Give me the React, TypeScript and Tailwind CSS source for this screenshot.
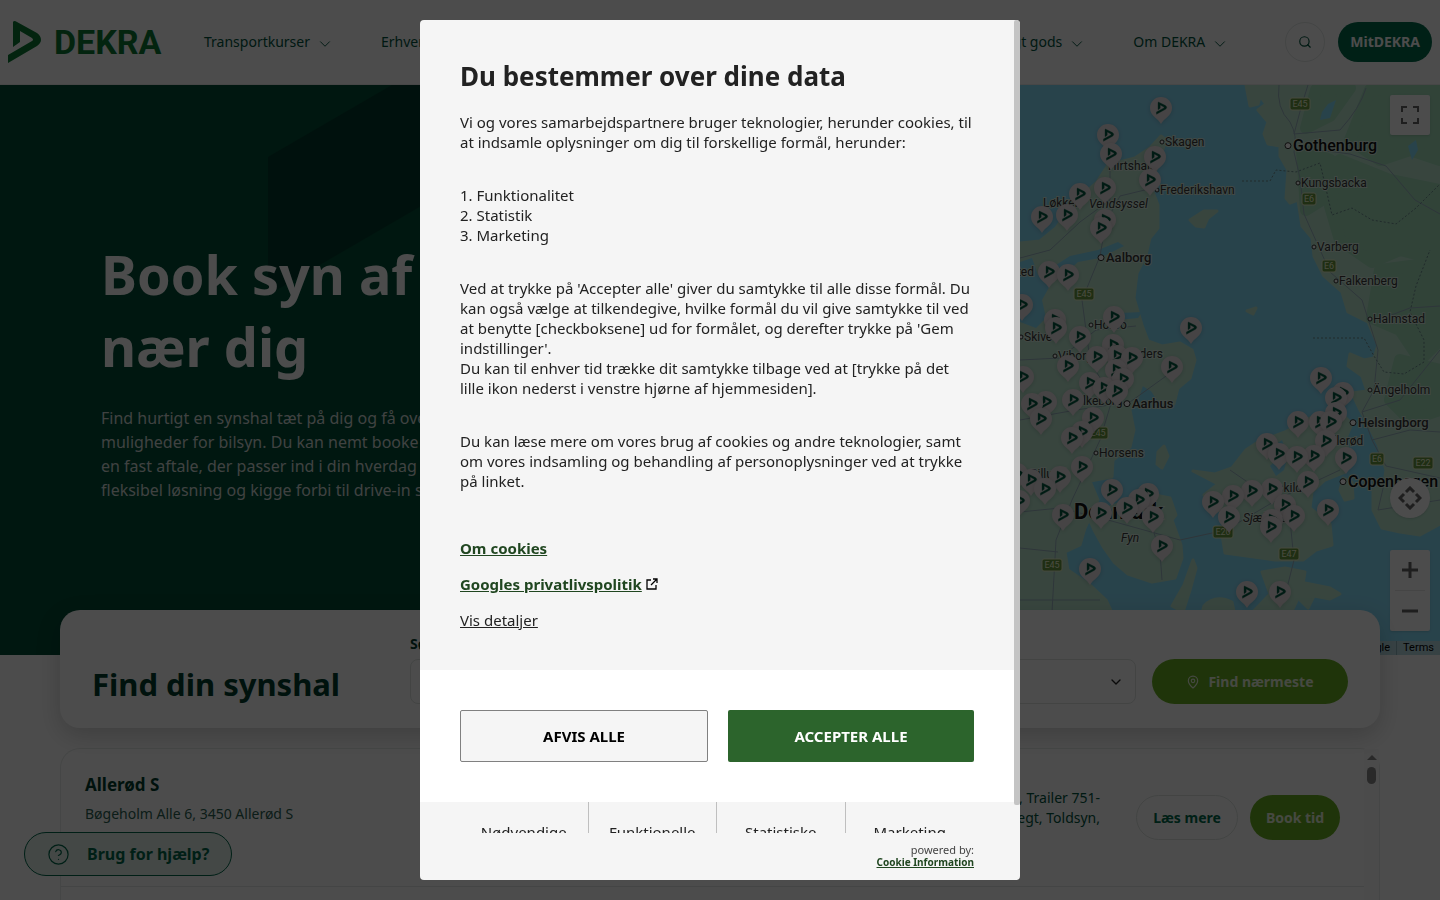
import { ChevronDown, CircleHelp, MapPin, Search } from 'lucide-react';

const sans = "font-['Noto_Sans',sans-serif]";

const markPath =
  'M13 22Q14 20 17 22L37 33Q41 36 41 40Q41 43 37 46L8 63V55L32 41Q34 40 32 38L20 31V42L13 47Z';

const pins: [number, number][] = [
  [1161, 108], [1108, 135], [1111, 154], [1155, 157], [1150, 180], [1105, 188], [1080, 194],
  [1067, 215], [1042, 217], [1105, 220], [1101, 228], [1049, 272], [1068, 275], [1022, 305],
  [1114, 317], [1055, 320], [1056, 328], [1191, 328], [1080, 337], [1113, 345], [1117, 356],
  [1097, 357], [1132, 358], [1068, 366], [1172, 367], [1116, 370], [1023, 377], [1321, 378],
  [1123, 379], [1090, 383], [1104, 388], [1117, 391], [1343, 393], [1336, 398], [1073, 400],
  [1046, 402], [1032, 404], [1336, 413], [1093, 418], [1041, 419], [1298, 422], [1320, 422],
  [1331, 422], [1082, 432], [1072, 438], [1326, 441], [1267, 444], [1279, 454], [1314, 456],
  [1297, 457], [1346, 458], [1082, 467], [1017, 474], [1060, 477], [1031, 480], [1308, 482],
  [1045, 489], [1272, 489], [1112, 490], [1252, 491], [1148, 494], [1233, 496], [1139, 500],
  [1019, 501], [1213, 502], [1285, 505], [1127, 508], [1328, 510], [1101, 513], [1063, 515],
  [1294, 516], [1153, 517], [1229, 517], [1272, 520], [1271, 527], [1162, 546], [1090, 569],
  [1247, 592], [1280, 592],
];

interface Place {
  name: string;
  x: number;
  y: number;
  size?: number;
  dot?: boolean;
  italic?: boolean;
  bold?: boolean;
}

const places: Place[] = [
  { name: 'Skagen', x: 1165, y: 146, dot: true },
  { name: 'Hirtshals', x: 1108, y: 170 },
  { name: 'Frederikshavn', x: 1160, y: 194, dot: true },
  { name: 'Løkken', x: 1043, y: 207 },
  { name: 'Vendsyssel', x: 1089, y: 208, italic: true },
  { name: 'Aalborg', x: 1106, y: 262, size: 13, dot: true },
  { name: 'Thisted', x: 994, y: 276 },
  { name: 'Hobro', x: 1094, y: 329, dot: true },
  { name: 'Skive', x: 1024, y: 341, dot: true },
  { name: 'Viborg', x: 1058, y: 360, dot: true },
  { name: 'Randers', x: 1119, y: 358, size: 12 },
  { name: 'Silkeborg', x: 1073, y: 405 },
  { name: 'Aarhus', x: 1132, y: 408, size: 13, dot: true },
  { name: 'Horsens', x: 1099, y: 457, dot: true },
  { name: 'Billund', x: 1030, y: 478 },
  { name: 'Fyn', x: 1121, y: 542, italic: true },
  { name: 'Sjælland', x: 1243, y: 522, italic: true },
  { name: 'Roskilde', x: 1263, y: 492 },
  { name: 'Hillerød', x: 1322, y: 445 },
  { name: 'Gothenburg', x: 1293, y: 151, size: 16, dot: true },
  { name: 'Kungsbacka', x: 1301, y: 187, dot: true },
  { name: 'Varberg', x: 1317, y: 251, dot: true },
  { name: 'Falkenberg', x: 1339, y: 285, dot: true },
  { name: 'Halmstad', x: 1373, y: 323, dot: true },
  { name: 'Ängelholm', x: 1373, y: 394, dot: true },
  { name: 'Helsingborg', x: 1358, y: 427, size: 13, dot: true },
  { name: 'Copenhagen', x: 1348, y: 487, size: 16, dot: true },
  { name: 'Denmark', x: 1074, y: 519, size: 22, bold: true },
];

const roadSigns = [
  { name: 'E45', x: 1300, y: 104 },
  { name: 'E6', x: 1309, y: 199 },
  { name: 'E6', x: 1329, y: 266 },
  { name: 'E45', x: 1084, y: 294 },
  { name: 'E45', x: 1098, y: 433 },
  { name: 'E6', x: 1377, y: 459 },
  { name: 'E22', x: 1423, y: 463 },
  { name: 'E20', x: 1223, y: 532 },
  { name: 'E47', x: 1289, y: 554 },
  { name: 'E45', x: 1052, y: 565 },
];

const land = [
  // Jylland
  'M720 240L1020 243L1040 241L1056 228L1075 202L1097 182L1108 165L1135 158L1150 148L1161 136L1166 140L1160 158L1153 178L1153 192L1158 205L1158 228L1150 238L1146 255L1137 273L1134 298L1142 325L1148 341L1162 346L1180 343L1192 350L1195 360L1190 378L1178 388L1174 404L1160 402L1152 390L1142 384L1138 396L1130 410L1134 430L1130 447L1113 460L1112 477L1090 481L1098 500L1085 528L1080 545L1065 552L1068 570L1090 585L1106 600L1113 615L1113 655L720 655Z',
  // Fyn
  'M1086 512L1110 507L1130 500L1150 490L1160 496L1170 498L1176 515L1172 520L1181 545L1182 558L1175 578L1152 582L1128 574L1114 562L1104 548L1094 530Z',
  'M1193 560L1196 568L1190 590L1183 612L1172 606L1184 585Z',
  // Sjælland
  'M1193 471L1215 474L1232 468L1246 450L1258 442L1285 432L1310 418L1338 410L1352 424L1345 440L1350 456L1345 472L1325 480L1312 492L1310 508L1330 524L1332 545L1316 550L1303 560L1275 560L1225 553L1222 535L1234 522L1216 508L1204 495L1218 484Z',
  'M1262 572L1285 568L1305 572L1302 590L1290 615L1250 615L1270 594Z',
  'M1204 606Q1215 594 1232 602L1236 620H1200Z',
  'M1305 583L1330 588L1340 594L1330 599L1314 596L1308 608L1300 600Z',
  'M1343 478L1352 482L1353 498L1345 500L1340 490Z',
  // Sverige
  'M1252 85L1266 104L1258 110L1268 122L1264 134L1268 144L1280 146L1280 156L1288 170L1286 198L1290 203L1298 200L1302 226L1312 238L1314 256L1324 276L1342 292L1348 312L1368 322L1378 345L1374 358L1364 360L1350 354L1348 366L1362 376L1367 391L1352 393L1360 410L1368 424L1378 444L1386 470L1384 484L1373 490L1373 510L1382 528L1400 532L1420 535L1440 524V85Z',
  'M1246 85L1262 90L1258 104L1250 106Z',
  'M1190 220L1204 211L1217 211L1208 218L1204 227L1196 226Z',
  'M1158 452L1164 446L1168 456L1162 468L1157 464Z',
  'M1247 311L1256 308L1253 314Z',
];

const roads = [
  'M1279 85Q1276 108 1290 122Q1298 136 1294 152L1300 178L1304 214L1330 272L1362 300L1378 350L1374 390L1362 412L1372 440L1386 466L1440 478',
  'M1308 85L1302 104L1294 134L1340 130Q1360 108 1366 88',
  'M1304 148L1350 154L1386 166L1415 200L1440 214',
  'M1153 188L1120 196L1106 222L1100 256L1082 300L1090 360L1112 400L1100 440L1072 500L1056 540L1052 612',
  'M1110 166V200L1080 222L1050 250L1020 258',
  'M1020 360L1060 358L1096 330L1136 326M1020 420L1076 410L1130 402L1180 366M1020 512L1060 508L1108 520L1180 540L1226 530L1280 498L1340 470',
  'M1150 520L1160 552L1162 580M1290 520L1294 560L1284 600M1230 470L1262 492L1310 490M1020 548L1058 552M1020 600H1100',
  'M1362 412L1400 400L1440 350M1378 320L1410 308L1440 306M1372 440L1410 430L1440 432M1385 480L1378 510L1440 500',
];

const forests = [
  'M1316 90L1350 88L1330 116L1306 128Z',
  'M1370 90L1440 85V160L1410 150L1380 160L1350 140Z',
  'M1340 160L1390 180L1440 190V260L1400 250L1372 262L1340 240L1330 206Z',
  'M1380 270L1440 262V340L1420 360L1400 330L1372 318Z',
  'M1400 360L1440 370V410L1410 420L1390 400Z',
  'M1302 150L1330 160L1322 200L1306 210Z',
];

function Map() {
  return (
    <svg
      viewBox="720 85 720 570"
      preserveAspectRatio="xMaxYMin slice"
      className="h-full w-full font-[Roboto,sans-serif]"
      role="img"
      aria-label="Kort over synshaller"
    >
      <rect x="720" y="85" width="720" height="570" fill="#88dffb" />
      {land.map((d) => (
        <path key={d} d={d} fill="#bce8d1" stroke="#bce8d1" strokeWidth="3" strokeLinejoin="round" />
      ))}
      {forests.map((d) => (
        <path key={d} d={d} fill="#a4dfbd" stroke="#a4dfbd" strokeWidth="12" strokeLinejoin="round" />
      ))}
      <g fill="#88dffb">
        <path d="M1020 262L1032 258L1038 275L1052 282L1042 300L1046 318L1036 328L1020 322Z" />
        <path d="M1042 274L1070 256L1098 250L1118 242L1124 246L1100 258L1078 262L1060 278Z" />
        <path d="M1106 320L1120 313L1142 312L1138 318L1118 320Z" />
        <path d="M1322 112L1328 104L1336 100L1330 118L1320 120Z" />
        <path d="M1408 146L1416 140L1418 150L1412 160Z" />
        <path d="M1274 446L1282 440L1288 456L1284 470L1276 476L1270 466L1276 460Z" />
      </g>
      <g fill="none" stroke="#9cb4c2" strokeWidth="1">
        {roads.map((d) => (
          <path key={d} d={d} />
        ))}
      </g>
      <g fill="none" stroke="#6d8f8f" strokeDasharray="2 2">
        <path d="M1242 181H1270L1276 170L1296 172L1320 163L1324 180L1332 215L1352 208L1372 220L1396 224L1416 208L1440 184" />
        <path d="M1313 338H1364L1374 356L1384 372L1404 374L1424 362L1424 340L1410 312L1416 286L1430 250" />
      </g>
      {roadSigns.map(({ name, x, y }) => (
        <g key={`${name}-${x}`}>
          <rect
            x={x - name.length * 3 - 1}
            y={y - 6}
            width={name.length * 6 + 2}
            height="12"
            rx="2"
            fill="#689b42"
            stroke="#e8f3c8"
          />
          <text x={x} y={y + 3} fontSize="9" textAnchor="middle" fill="#f6ffd8">
            {name}
          </text>
        </g>
      ))}
      {places.map(({ name, x, y, size = 12, dot, italic, bold }) => (
        <g key={name}>
          {dot && (
            <circle
              cx={x - (size > 12 ? 5 : 3)}
              cy={y - size / 3}
              r={size > 12 ? 3 : 2}
              fill="#fff"
              stroke="#333"
            />
          )}
          <text
            x={x}
            y={y}
            fontSize={size}
            fontWeight={bold ? 700 : size > 12 ? 500 : 400}
            fontStyle={italic ? 'italic' : 'normal'}
            fill={size > 14 ? '#111' : '#3a3a3a'}
            stroke="#d9f2e4"
            strokeWidth="2"
            paintOrder="stroke"
          >
            {name}
          </text>
        </g>
      ))}
      {pins.map(([x, y]) => (
        <g key={`${x}-${y}`} transform={`translate(${x} ${y})`}>
          <path
            d="M0 16C-3 10-11 8-11 0A11 11 0 0 1 11 0C11 8 3 10 0 16Z"
            fill="#ebe3e6"
            className="drop-shadow-sm"
          />
          <path d={markPath} transform="translate(-7 -12) scale(.31 .29)" fill="#005a41" stroke="#005a41" />
        </g>
      ))}
    </svg>
  );
}

function MapControls() {
  return (
    <>
      <button
        aria-label="Fuld skærm"
        className="absolute top-[10px] right-[10px] flex size-10 items-center justify-center rounded-xs bg-white text-[#666] shadow"
      >
        <svg viewBox="0 0 18 18" className="size-[18px]" fill="currentColor">
          <path d="M0 0v6h2V2h4V0zM12 0v2h4v4h2V0zM16 16h-4v2h6v-6h-2zM2 12H0v6h6v-2H2z" />
        </svg>
      </button>
      <button
        aria-label="Kamerastyring"
        className="absolute top-[393px] right-[10px] flex size-10 items-center justify-center rounded-full bg-white text-[#666] shadow"
      >
        <svg viewBox="0 0 24 24" className="size-6" fill="none" stroke="currentColor" strokeWidth="3">
          <path d="M8 6L12 2L16 6M8 18L12 22L16 18M6 8L2 12L6 16M18 8L22 12L18 16" />
        </svg>
      </button>
      <div className="absolute top-[465px] right-[10px] flex w-10 flex-col rounded-xs bg-white text-[#666] shadow">
        <button aria-label="Zoom ind" className="flex h-10 items-center justify-center">
          <svg viewBox="0 0 18 18" className="size-[18px]" stroke="currentColor" strokeWidth="3">
            <path d="M9 1V17M1 9H17" />
          </svg>
        </button>
        <span className="mx-[5px] h-px bg-[#e6e6e6]" />
        <button aria-label="Zoom ud" className="flex h-10 items-center justify-center">
          <svg viewBox="0 0 18 18" className="size-[18px]" stroke="currentColor" strokeWidth="3">
            <path d="M1 9H17" />
          </svg>
        </button>
      </div>
      <div className="absolute right-0 bottom-0 flex h-[14px] items-center bg-[#b9dde4] font-[Roboto,sans-serif] text-[11px] leading-[14px] text-black">
        <span className="px-[6px]">Map data ©2025 Google</span>
        <a href="#terms" className="border-l border-[#8fb5bf] px-[6px]">
          Terms
        </a>
      </div>
    </>
  );
}

function NavItem({ label }: { label: string }) {
  return (
    <button className="flex items-center gap-[6px] text-sm whitespace-nowrap text-[#00543e]">
      {label}
      <ChevronDown className="mt-1 size-[18px]" strokeWidth={1.25} />
    </button>
  );
}

function Header() {
  return (
    <header className="flex h-[85px] items-center border-b border-[#eee] bg-white px-2">
      <a href="#home" aria-label="DEKRA" className="flex items-center text-[#0b7a35]">
        <svg viewBox="8 20 34 44" className="h-[44px] w-[34px]" fill="currentColor">
          <path d={markPath} />
        </svg>
        <span className="ml-3 w-[104px] font-[Roboto,sans-serif] text-[34px] leading-none font-bold">
          DEKRA
        </span>
      </a>
      <nav className="ml-[46px] flex flex-1 justify-between pr-[56px]">
        <div className="flex gap-[47px]">
          <NavItem label="Transportkurser" />
          <NavItem label="Erhvervskurser" />
        </div>
        <div className="flex gap-[47px]">
          <NavItem label="Farligt gods" />
          <NavItem label="Om DEKRA" />
        </div>
      </nav>
      <button
        aria-label="Søg"
        className="flex size-10 items-center justify-center rounded-full border border-[#e3e8e6] text-[#00543e]"
      >
        <Search className="size-[14px]" />
      </button>
      <button className="ml-[13px] h-10 rounded-full bg-[#006b4c] px-3 text-sm font-bold text-white">
        MitDEKRA
      </button>
    </header>
  );
}

function Hero() {
  return (
    <section className="grid h-[570px] grid-cols-2">
      <div className="relative flex flex-col justify-center gap-6 overflow-hidden bg-[#004d36] pl-[101px]">
        <svg viewBox="0 0 720 570" className="absolute inset-0 h-full w-full" fill="#003a2c">
          <path d="M268 72L392 0H720V0L440 110L268 210Z" />
        </svg>
        <h1 className="relative text-[54px] leading-[72px] font-bold text-white">
          Book syn af bil
          <br />
          nær dig
        </h1>
        <p className="relative text-base leading-6 text-[#d5dedb]">
          Find hurtigt en synshal tæt på dig og få overblik over dine
          <br />
          muligheder for bilsyn. Du kan nemt booke en tid til
          <br />
          en fast aftale, der passer ind i din hverdag eller vælge en
          <br />
          fleksibel løsning og kigge forbi til drive-in syn.
        </p>
      </div>
      <div className="relative overflow-hidden">
        <Map />
        <MapControls />
      </div>
    </section>
  );
}

function SearchCard() {
  return (
    <section className="relative mx-[60px] -mt-[45px] flex items-end gap-4 rounded-[20px] bg-white px-8 py-6 shadow-[0_8px_24px_rgba(0,0,0,0.18)]">
      <h2 className="w-[302px] text-[31px] leading-10 font-bold text-[#003d2d]">Find din synshal</h2>
      <div className="flex flex-1 flex-col gap-[6px]">
        <label htmlFor="hall" className="text-sm leading-[19px] font-bold text-[#003d2d]">
          Søg efter synshal
        </label>
        <div className="relative">
          <select
            id="hall"
            defaultValue=""
            className="h-[45px] w-full appearance-none rounded-lg border border-[#dfe5e2] px-4 text-sm text-[#333]"
          >
            <option value="">Vælg synshal</option>
          </select>
          <ChevronDown className="pointer-events-none absolute top-[15px] right-3 size-4 text-[#222]" />
        </div>
      </div>
      <button className="flex h-[45px] w-[196px] items-center justify-center gap-2 rounded-full bg-[#6ab023] text-sm font-bold text-[#e9f3de]">
        <MapPin className="size-[14px]" />
        Find nærmeste
      </button>
    </section>
  );
}

function HallList() {
  return (
    <section className="mx-[60px] mt-5 flex min-h-[200px] rounded-t-[20px] border border-b-0 border-[#e8ecea] bg-white">
      <ul className="flex-1">
        <li className="flex min-h-[138px] items-center border-b border-[#e3e8e6] px-6">
          <div className="mt-6 self-start">
            <h3 className="text-[17px] leading-6 font-bold text-[#003d2d]">Allerød S</h3>
            <p className="mt-[7px] text-sm leading-5 text-[#2b6152]">Bøgeholm Alle 6, 3450 Allerød S</p>
          </div>
          <p className="ml-auto pb-5 text-right text-sm leading-5 text-[#00543e]">
            Trailer 0-750, Trailer 751-
            <br />
            3500, Vægt, Toldsyn,
          </p>
          <button className="ml-9 h-[45px] w-[102px] rounded-full border border-[#dfe5e2] text-sm font-bold text-[#006b4c]">
            Læs mere
          </button>
          <button className="ml-3 h-[45px] w-[90px] rounded-full bg-[#6ab023] text-sm font-bold text-[#e9f3de]">
            Book tid
          </button>
        </li>
      </ul>
      <div className="flex w-[15px] flex-col items-center gap-[7px] bg-[#fbfbfb] pt-[6px]">
        <svg viewBox="0 0 10 5" className="h-[5px] w-[10px]" fill="#8a8a8a">
          <path d="M0 5L5 0L10 5Z" />
        </svg>
        <span className="h-[17px] w-[9px] rounded-full bg-[#8a8a8a]" />
      </div>
    </section>
  );
}

const bodyLink = 'font-bold text-[#204620] underline';

function CookieDialog() {
  return (
    <div className="fixed inset-0 flex justify-center bg-black/70 p-5">
      <div
        role="dialog"
        aria-modal="true"
        aria-labelledby="cookie-title"
        className="flex w-full max-w-[600px] flex-col overflow-hidden rounded bg-[#f5f5f5] text-[15px] leading-5 text-[#222]"
      >
        <div className="flex min-h-0 flex-1">
          <div className="min-w-0 flex-1 overflow-hidden">
            <div className="px-10 pt-[38px] pb-10">
              <h2 id="cookie-title" className="text-[26px] leading-9 font-bold">
                Du bestemmer over dine data
              </h2>
              <div className="mt-[18px] flex flex-col gap-[33px]">
                <p>
                  Vi og vores samarbejdspartnere bruger teknologier, herunder cookies, til at indsamle
                  oplysninger om dig til forskellige formål, herunder:
                </p>
                <ol className="list-inside list-decimal">
                  <li>Funktionalitet</li>
                  <li>Statistik</li>
                  <li>Marketing</li>
                </ol>
                <p>
                  Ved at trykke på 'Accepter alle' giver du samtykke til alle disse formål. Du kan også
                  vælge at tilkendegive, hvilke formål du vil give samtykke til ved at benytte
                  [checkboksene] ud for formålet, og derefter trykke på 'Gem indstillinger'.
                  <br />
                  Du kan til enhver tid trække dit samtykke tilbage ved at [trykke på det lille ikon
                  nederst i venstre hjørne af hjemmesiden].
                </p>
                <p>
                  Du kan læse mere om vores brug af cookies og andre teknologier, samt om vores indsamling
                  og behandling af personoplysninger ved at trykke på linket.
                </p>
              </div>
              <div className="mt-[47px] flex flex-col items-start gap-4">
                <a href="#cookies" className={bodyLink}>
                  Om cookies
                </a>
                <div className="flex items-center gap-1">
                  <a href="#google" className={bodyLink}>
                    Googles privatlivspolitik
                  </a>
                  <svg viewBox="0 0 12 12" className="size-3" fill="none" stroke="#000" strokeWidth="1.3">
                    <path d="M5 2H1V11H10V7M7 1H11V5M11 1L5 7" />
                  </svg>
                </div>
                <button className="underline">Vis detaljer</button>
              </div>
            </div>
            <div className="flex gap-5 bg-white p-10">
              <button className="h-[52px] flex-1 rounded-xs border border-[#808080] bg-[#f5f5f5] font-bold text-black">
                AFVIS ALLE
              </button>
              <button className="h-[52px] flex-1 rounded-xs bg-[#2c642c] font-bold text-white">
                ACCEPTER ALLE
              </button>
            </div>
            <div className="grid grid-cols-4 divide-x divide-[#bfbfbf] px-10">
              {['Nødvendige', 'Funktionelle', 'Statistiske', 'Marketing'].map((name) => (
                <span key={name} className="h-20 pt-5 text-center">
                  {name}
                </span>
              ))}
            </div>
          </div>
          <div className="w-[6px]">
            <div className="h-[96.5%] rounded-xs bg-[#c4c4c4]" />
          </div>
        </div>
        <div className="flex flex-col items-end px-[46px] pt-[10px] pb-[11px] leading-[13px]">
          <span className="text-[11px] text-[#444]">powered by:</span>
          <a href="#cookie-information" className="text-[10px] font-bold text-[#204620] underline">
            Cookie Information
          </a>
        </div>
      </div>
    </div>
  );
}

export default function App() {
  return (
    <div className={`h-screen overflow-hidden bg-white ${sans}`}>
      <Header />
      <main>
        <Hero />
        <SearchCard />
        <HallList />
      </main>
      <button className="fixed bottom-6 left-6 flex h-11 items-center gap-[17px] rounded-full border border-[#00694b] bg-[#e3f0ea] px-[22px] text-base font-bold text-[#00694b]">
        <CircleHelp className="size-[23px]" strokeWidth={1.25} />
        Brug for hjælp?
      </button>
      <CookieDialog />
    </div>
  );
}
